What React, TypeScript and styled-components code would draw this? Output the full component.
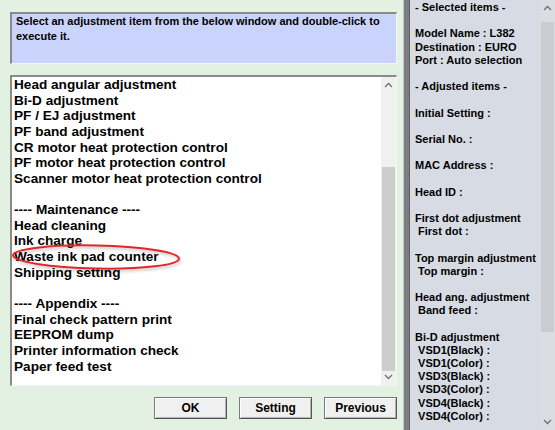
import React from "react";
import styled, { createGlobalStyle } from "styled-components";

const GlobalStyle = createGlobalStyle`
  html, body {
    margin: 0;
    padding: 0;
    background: #d7dce4;
  }
  * {
    box-sizing: border-box;
  }
`;

const listItems = [
  "Head angular adjustment",
  "Bi-D adjustment",
  "PF / EJ adjustment",
  "PF band adjustment",
  "CR motor heat protection control",
  "PF motor heat protection control",
  "Scanner motor heat protection control",
  "",
  "---- Maintenance ----",
  "Head cleaning",
  "Ink charge",
  "Waste ink pad counter",
  "Shipping setting",
  "",
  "---- Appendix ----",
  "Final check pattern print",
  "EEPROM dump",
  "Printer information check",
  "Paper feed test",
];

const infoLines = [
  "- Selected items -",
  "",
  "Model Name : L382",
  "Destination : EURO",
  "Port : Auto selection",
  "",
  "- Adjusted items -",
  "",
  "Initial Setting :",
  "",
  "Serial No. :",
  "",
  "MAC Address :",
  "",
  "Head ID :",
  "",
  "First dot adjustment",
  " First dot :",
  "",
  "Top margin adjustment",
  " Top margin :",
  "",
  "Head ang. adjustment",
  " Band feed :",
  "",
  "Bi-D adjustment",
  " VSD1(Black) :",
  " VSD1(Color) :",
  " VSD3(Black) :",
  " VSD3(Color) :",
  " VSD4(Black) :",
  " VSD4(Color) :",
];

function Chevron({ up }: { up?: boolean }) {
  return (
    <svg width="9" height="6" viewBox="0 0 9 6">
      <polyline
        points={up ? "1,5 4.5,1.5 8,5" : "1,1 4.5,4.5 8,1"}
        fill="none"
        stroke="#707070"
        strokeWidth="1.3"
      />
    </svg>
  );
}

export default function App() {
  return (
    <>
      <GlobalStyle />
      <Window>
        <LeftPane>
          <Instruction>
            Select an adjustment item from the below window and double-click to
            execute it.
          </Instruction>
          <ListBox>
            <ListContent>
              {listItems.map((item, i) => (
                <ListLine key={i}>{item}</ListLine>
              ))}
            </ListContent>
            <ScrollBar>
              <Arrow>
                <Chevron up />
              </Arrow>
              <Track>
                <Thumb $top={74} $height={204} />
              </Track>
              <Arrow>
                <Chevron />
              </Arrow>
            </ScrollBar>
            <Highlight width="176" height="36" viewBox="0 0 176 36">
              <ellipse
                cx="88"
                cy="18"
                rx="83"
                ry="11.5"
                fill="none"
                stroke="#e3262a"
                strokeWidth="2"
                transform="rotate(1.2 88 18)"
              />
            </Highlight>
          </ListBox>
          <ButtonRow>
            <Button>OK</Button>
            <Button>Setting</Button>
            <Button>Previous</Button>
          </ButtonRow>
        </LeftPane>
        <Divider />
        <RightPane>
          <InfoText>
            {infoLines.map((line, i) => (
              <InfoLine key={i}>{line}</InfoLine>
            ))}
          </InfoText>
          <PanelScroll>
            <Arrow>
              <Chevron up />
            </Arrow>
            <Track>
              <Thumb $top={6} $height={310} $light />
            </Track>
            <Arrow>
              <Chevron />
            </Arrow>
          </PanelScroll>
        </RightPane>
      </Window>
    </>
  );
}

const Window = styled.div`
  width: 555px;
  height: 430px;
  display: flex;
  overflow: hidden;
  font-family: "Liberation Sans", Arial, sans-serif;
  font-weight: 700;
  color: #000;
`;

const LeftPane = styled.div`
  width: 403px;
  flex-shrink: 0;
  background-color: #e3f1e3;
  padding: 12px 6px 0 10px;
  display: flex;
  flex-direction: column;
`;

const Instruction = styled.div`
  height: 52px;
  background-color: #c9d3fb;
  border-top: 2px solid #8a8a8a;
  border-left: 2px solid #8a8a8a;
  border-right: 1px solid #f4f8f4;
  border-bottom: 1px solid #f4f8f4;
  padding: 0 4px;
  font-size: 11px;
  line-height: 15px;
`;

const ListBox = styled.div`
  position: relative;
  margin-top: 11px;
  height: 311px;
  display: flex;
  background-color: #fff;
  border-top: 2px solid #8a8a8a;
  border-left: 2px solid #8a8a8a;
  border-right: 1px solid #f4f8f4;
  border-bottom: 1px solid #f4f8f4;
`;

const ListContent = styled.div`
  flex: 1;
  padding: 0 2px;
  font-size: 13.6px;
  line-height: 15.65px;
  color: #000;
`;

const ListLine = styled.div`
  height: 15.65px;
  white-space: pre;
`;

const ScrollBar = styled.div`
  width: 15px;
  display: flex;
  flex-direction: column;
  background-color: #f0f0f0;
`;

const PanelScroll = styled(ScrollBar)`
  background-color: #dadde3;
`;

const Arrow = styled.div`
  height: 16px;
  display: flex;
  align-items: center;
  justify-content: center;
  flex-shrink: 0;
`;

const Track = styled.div`
  flex: 1;
  position: relative;
`;

const Thumb = styled.div<{ $top: number; $height: number; $light?: boolean }>`
  position: absolute;
  left: 1px;
  right: 1px;
  top: ${(p) => p.$top}px;
  height: ${(p) => p.$height}px;
  background-color: ${(p) => (p.$light ? "#c9ccd1" : "#cdcdcd")};
`;

const Highlight = styled.svg`
  position: absolute;
  left: -4px;
  top: 162px;
  overflow: visible;
  filter: drop-shadow(1px 2px 1.5px rgba(0, 0, 0, 0.25));
  pointer-events: none;
`;

const ButtonRow = styled.div`
  margin-top: 11px;
  display: flex;
  justify-content: flex-end;
  gap: 12px;
`;

const Button = styled.button`
  width: 73px;
  height: 22px;
  padding: 0;
  background-color: #f0f0f0;
  border: 1px solid #7a7a7a;
  border-bottom-color: #555;
  border-right-color: #555;
  box-shadow: inset 1px 1px 0 #fff, inset -1px -1px 0 #b4b4b4;
  font-family: "Liberation Sans", Arial, sans-serif;
  font-weight: 700;
  font-size: 12px;
  color: #000;
`;

const Divider = styled.div`
  width: 7px;
  flex-shrink: 0;
  background-color: #7b7d80;
  border-left: 1px solid #c4c8cc;
  border-right: 1px solid #5d5f62;
`;

const RightPane = styled.div`
  flex: 1;
  display: flex;
  background-color: #d7dce4;
`;

const InfoText = styled.div`
  flex: 1;
  padding: 1px 0 0 5px;
  font-size: 11px;
  line-height: 13.2px;
  color: #000;
`;

const InfoLine = styled.div`
  height: 13.2px;
  white-space: pre;
`;
